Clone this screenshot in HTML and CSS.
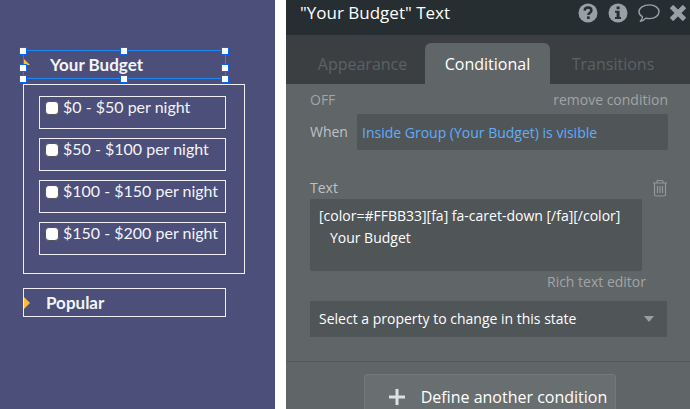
FILE: index.html
```html
<!DOCTYPE html>
<html lang="en">
<head>
    <meta charset="UTF-8" />
    <meta name="viewport" content="width=device-width, initial-scale=1.0" />
    <link rel="stylesheet" href="styles.css">
    <title>Your Budget - Editor</title>
</head>
<body>
    <div class="editor">
        <main class="canvas">
            <div class="element selected">
                <svg class="caret" width="6" height="12" viewBox="0 0 6 12"><path d="M0 0L6 6H0z" fill="#ffbb33" /></svg>
                <span class="element-title indent">Your Budget</span>
                <i class="handle top left"></i>
                <i class="handle top center"></i>
                <i class="handle top right"></i>
                <i class="handle middle left"></i>
                <i class="handle middle right"></i>
                <i class="handle bottom left"></i>
                <i class="handle bottom center"></i>
                <i class="handle bottom right"></i>
            </div>
            <div class="group">
                <label class="option"><input type="checkbox" />$0 - $50 per night</label>
                <label class="option"><input type="checkbox" />$50 - $100 per night</label>
                <label class="option"><input type="checkbox" />$100 - $150 per night</label>
                <label class="option"><input type="checkbox" />$150 - $200 per night</label>
            </div>
            <div class="element">
                <svg class="caret" width="6" height="12" viewBox="0 0 6 12"><path d="M0 0L6 6L0 12z" fill="#ffbb33" /></svg>
                <span class="element-title">Popular</span>
            </div>
        </main>

        <aside class="panel">
            <header class="panel-header">
                <h1>"Your Budget" Text</h1>
                <div class="actions">
                    <button type="button" aria-label="Help">
                        <svg width="20" height="20" viewBox="0 0 20 20">
                            <circle cx="10" cy="10" r="9.5" fill="#97a1a5" />
                            <path d="M6.6 7.7C6.8 5.5 8.2 4.6 10 4.6c2 0 3.4 1.1 3.4 2.8 0 2.4-3 2.3-3 4.6" fill="none" stroke="#272e31" stroke-width="2.5" />
                            <path d="M9 13.4h2.7v2.5H9z" fill="#272e31" />
                        </svg>
                    </button>
                    <button type="button" aria-label="Info">
                        <svg width="20" height="20" viewBox="0 0 20 20">
                            <circle cx="10" cy="10" r="9.5" fill="#97a1a5" />
                            <path d="M8.6 3.6h3v2.6h-3zM7 7.8h4.6v6.2H13v2H7v-2h1.6V9.8H7z" fill="#272e31" />
                        </svg>
                    </button>
                    <button type="button" aria-label="Comments">
                        <svg width="22" height="20" viewBox="0 0 22 20">
                            <path d="M11.4 1.9C17 1.9 21 4.9 21 8.7s-4.1 6.9-9.6 6.9c-1.3 0-2.5-.2-3.6-.5-1.300 1.7-3 2.7-5.500 3.1 1.4-1.2 2.1-2.5 2.2-4.400C2.3 12.600 1 10.800 1 8.700c0-3.800 4.400-6.800 10.400-6.800z" fill="none" stroke="#97a1a5" stroke-width="1.4" stroke-linejoin="round" />
                        </svg>
                    </button>
                    <button type="button" aria-label="Close">
                        <svg width="16" height="16" viewBox="0 0 16 16">
                            <path d="M3.2 3.2l9.6 9.6M12.8 3.2l-9.6 9.6" stroke="#97a1a5" stroke-width="4.8" stroke-linecap="square" />
                        </svg>
                    </button>
                </div>
            </header>

            <nav class="tabs">
                <button type="button" class="tab">Appearance</button>
                <button type="button" class="tab active">Conditional</button>
                <button type="button" class="tab">Transitions</button>
            </nav>

            <section class="condition">
                <div class="row">
                    <button type="button" class="link">OFF</button>
                    <button type="button" class="link">remove condition</button>
                </div>
                <div class="when">
                    <label for="when">When</label>
                    <input type="text" id="when" value="Inside Group (Your Budget) is visible" />
                </div>
                <div class="row text-row">
                    <label for="text">Text</label>
                    <button type="button" class="trash" aria-label="Delete">
                        <svg width="16" height="18" viewBox="0 0 16 18">
                            <path d="M1 4h14M5 4V2.5q0-1 1-1h4q1 0 1 1V4M2.5 4v11.5q0 1.5 1.5 1.5h8q1.5 0 1.5-1.5V4M5.500 7v7M8 7v7M10.500 7v7" fill="none" stroke="#92979a" stroke-width="1.2" />
                        </svg>
                    </button>
                </div>
                <textarea id="text" spellcheck="false">[color=#FFBB33][fa] fa-caret-down [/fa][/color]
&nbsp;&nbsp;&nbsp;Your Budget</textarea>
                <button type="button" class="link rich">Rich text editor</button>
                <select aria-label="Property">
                    <option>Select a property to change in this state</option>
                </select>
            </section>

            <footer class="panel-footer">
                <button type="button" class="define">
                    <svg width="18" height="18" viewBox="0 0 18 18"><path d="M9 1v16M1 9h16" stroke="#dddfe0" stroke-width="3" /></svg>
                    Define another condition
                </button>
            </footer>
        </aside>
    </div>
</body>
</html>
```
FILE: styles.css
```css
* {
    box-sizing: border-box;
    margin: 0;
    padding: 0;
}
body {
    background-color: #fff;
    font-family: "Open Sans", sans-serif;
    font-size: 14px;
    line-height: 20px;
}
button, input, textarea, select {
    font: inherit;
    color: inherit;
    border: none;
    background: none;
}
button {
    cursor: pointer;
}
.editor {
    display: grid;
    grid-template-columns: minmax(0, 275fr) minmax(0, 404fr);
    gap: 11px;
    height: 100vh;
    overflow: hidden;
}

/* Canvas */
.canvas {
    background-color: #4b4f79;
    color: #f4f4f8;
    font-family: Lato, sans-serif;
    font-size: 16px;
    padding: 50px 30px 0 23px;
}
.element {
    position: relative;
    display: flex;
    align-items: center;
    height: 29px;
    margin-right: 19px;
    border: 1px solid #eeeef3;
    font-size: 17px;
    font-weight: bold;
}
.element-title {
    padding-left: 16px;
}
.element-title.indent {
    padding-left: 20px;
}
.element.selected {
    border-color: #2188f3;
}
.caret {
    flex: none;
}
.handle {
    position: absolute;
    width: 8px;
    height: 8px;
    background-color: #fff;
    border: 1px solid #0865f5;
}
.top {
    top: -4px;
}
.middle {
    top: 13px;
}
.bottom {
    bottom: -5px;
}
.left {
    left: -5px;
}
.center {
    left: calc(50% - 5px);
}
.right {
    right: -4px;
}
.group {
    display: flex;
    flex-direction: column;
    gap: 9px;
    margin: 5px 0 14px;
    padding: 11px 18px 18px 15px;
    border: 1px solid #eeeef3;
}
.option {
    display: flex;
    align-items: flex-start;
    gap: 4px;
    height: 33px;
    padding-left: 5px;
    border: 1px solid #eeeef3;
    white-space: nowrap;
}
.option input {
    appearance: none;
    flex: none;
    width: 14px;
    height: 14px;
    margin-top: 4px;
    background-color: #fff;
    border: 1px solid #555;
    border-radius: 4px;
}

/* Property panel */
.panel {
    background-color: #606568;
    color: #fff;
}
.panel-header {
    display: flex;
    align-items: center;
    justify-content: space-between;
    height: 35px;
    padding: 0 4px 10px 14px;
    background-color: #272e31;
}
h1 {
    font-size: 17px;
    font-weight: normal;
}
.actions {
    display: flex;
    align-items: center;
    gap: 10px;
}
.actions button {
    display: flex;
}
.tabs {
    display: grid;
    grid-template-columns: 139fr 125fr 140fr;
    align-items: end;
    height: 49px;
    background-color: #3b3f42;
}
.tab {
    height: 41px;
    font-size: 16px;
    color: #5c6164;
}
.tab:first-child {
    padding-left: 14px;
}
.tab:last-child {
    padding-right: 14px;
}
.tab.active {
    background-color: #606568;
    border-radius: 6px 6px 0 0;
    color: #fff;
}
.condition {
    display: flex;
    flex-direction: column;
    padding: 6px 22px 24px 24px;
    color: #bfc2c4;
    border-bottom: 1px solid #54595c;
}
.row {
    display: flex;
    align-items: center;
    justify-content: space-between;
}
.link {
    color: #a0a4a6;
}
.when {
    display: flex;
    align-items: center;
    gap: 9px;
    margin-top: 4px;
}
input[type="text"] {
    flex: 1;
    min-width: 0;
    height: 36px;
    padding-left: 5px;
    background-color: #505558;
    border-radius: 2px;
    color: #60adf8;
}
.text-row {
    margin-top: 27px;
    height: 22px;
}
.trash {
    display: flex;
}
textarea {
    height: 72px;
    margin-right: 26px;
    padding: 6px 9px;
    background-color: #505558;
    border-radius: 2px;
    color: #fff;
    line-height: 22px;
    resize: none;
    overflow: hidden;
}
.rich {
    align-self: flex-end;
    margin: 1px 22px 9px 0;
}
select {
    appearance: none;
    height: 36px;
    margin-right: 1px;
    padding-left: 9px;
    background: #505558 url("data:image/svg+xml,%3Csvg xmlns='http://www.w3.org/2000/svg' width='10' height='6'%3E%3Cpath d='M0 0h10L5 6z' fill='%23999ea0'/%3E%3C/svg%3E") no-repeat right 13px center;
    color: #fff;
}
.panel-footer {
    display: flex;
    justify-content: center;
    padding: 12px 0 12px 4px;
}
.define {
    display: flex;
    align-items: center;
    gap: 15px;
    height: 45px;
    padding: 0 8px 0 23px;
    background-color: #696e71;
    border: 1px solid #73787a;
    border-radius: 3px;
    font-size: 16px;
    white-space: nowrap;
}
```
